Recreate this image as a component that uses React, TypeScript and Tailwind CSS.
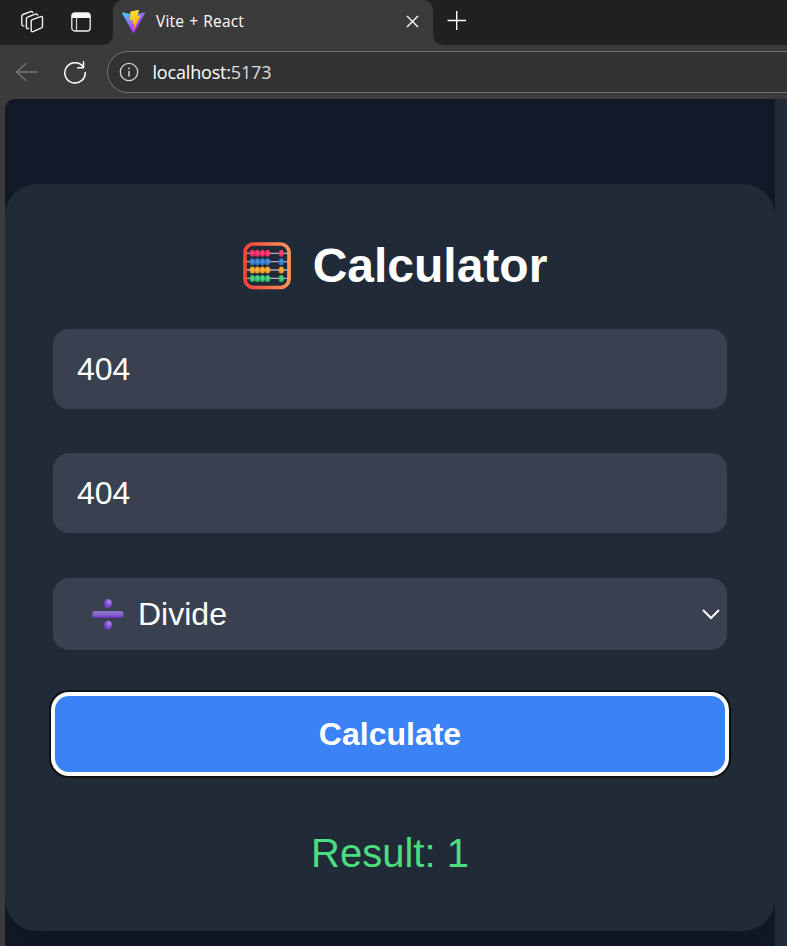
import React from "react";

function WorkspacesIcon() {
  return (
    <svg width="24" height="24" viewBox="0 0 24 24" fill="none" stroke="#f0f0f0" strokeWidth="1.4" strokeLinejoin="round" strokeLinecap="round">
      <path d="M11.200 11.300q0-1.300 1.200-1.700l8.200-2.900q1.900-.6 1.900 1.200v8.200q0 1.200-1 1.700l-7.900 3.600q-2.400 1-2.400-1.200z" />
      <path d="M8.300 18.500q-1.900.5-1.900-1.500V8.900q0-1.300 1.200-1.800l7.700-2.900q1.800-.6 2.300.9" />
      <path d="M3.800 15.900q-2 .2-2-1.700V6.300q0-1.300 1.200-1.800l7.400-2.800q1.800-.6 2.400.9" />
    </svg>
  );
}

function TabActionsIcon() {
  return (
    <svg width="20" height="20" viewBox="0 0 20 20" fill="none">
      <rect x=".8" y=".8" width="18.400" height="18.200" rx="3" stroke="#f0f0f0" strokeWidth="1.300" />
      <path d="M1 6V4q0-3 3-3h12q3 0 3 3v2z" fill="#f7f7f7" />
      <path d="M5.500 6v13" stroke="#d0d0d0" strokeWidth="1.300" />
    </svg>
  );
}

function ViteLogo() {
  return (
    <svg width="23" height="23" viewBox="0 0 256 257">
      <defs>
        <linearGradient id="viteBody" x1="-.828%" x2="57.636%" y1="7.652%" y2="78.411%">
          <stop offset="0%" stopColor="#41D1FF" />
          <stop offset="100%" stopColor="#BD34FE" />
        </linearGradient>
        <linearGradient id="viteBolt" x1="43.376%" x2="50.316%" y1="2.242%" y2="89.030%">
          <stop offset="0%" stopColor="#FFEA83" />
          <stop offset="8.333%" stopColor="#FFDD35" />
          <stop offset="100%" stopColor="#FFA800" />
        </linearGradient>
      </defs>
      <path fill="url(#viteBody)" d="M255.153 37.938L134.897 252.976c-2.483 4.440-8.862 4.466-11.382.048L.875 37.958c-2.746-4.814 1.371-10.646 6.827-9.670l120.385 21.517a6.537 6.537 0 0 0 2.322-.004l117.867-21.483c5.438-.991 9.574 4.796 6.877 9.620Z" />
      <path fill="url(#viteBolt)" d="M185.432.063L96.440 17.501a3.268 3.268 0 0 0-2.634 3.014l-5.474 92.456a3.268 3.268 0 0 0 3.997 3.378l24.777-5.718c2.318-.535 4.413 1.507 3.936 3.838l-7.361 36.047c-.495 2.426 1.782 4.500 4.151 3.780l15.304-4.649c2.372-.720 4.652 1.360 4.150 3.788l-11.698 56.621c-.732 3.542 3.979 5.473 5.943 2.437l1.313-2.028l72.516-144.720c1.215-2.423-.880-5.186-3.540-4.672l-25.505 4.922c-2.396.462-4.435-1.770-3.759-4.114l16.646-57.705c.677-2.350-1.370-4.583-3.769-4.113Z" />
    </svg>
  );
}

const beadRows = [
  { y: 12.2, color: "#e9295f", light: "#ff5d91" },
  { y: 20.6, color: "#3277c8", light: "#61a5ed" },
  { y: 28.9, color: "#ef9a25", light: "#ffc550" },
  { y: 37.3, color: "#34b86c", light: "#6ae99a" },
];

function AbacusIcon() {
  return (
    <svg width="48" height="48" viewBox="0 0 48 48">
      <defs>
        <linearGradient id="abacusFrame">
          <stop stopColor="#f9423a" />
          <stop offset="1" stopColor="#ff9456" />
        </linearGradient>
      </defs>
      {beadRows.map((row) => (
        <g key={row.y}>
          <path d={`M3 ${row.y - 0.9}h42`} stroke="#bda9c9" strokeWidth="1.300" />
          {[9.3, 14.3, 19.4, 24.6, 38.3].map((x) => (
            <g key={x}>
              <ellipse cx={x} cy={row.y - 0.900} rx="2.700" ry="3.500" fill={row.color} />
              <ellipse cx={x + 0.300} cy={row.y - 1.300} rx="1.300" ry="2.100" fill={row.light} opacity=".65" />
            </g>
          ))}
        </g>
      ))}
      <rect x="2" y="2" width="44" height="43.500" rx="8.500" fill="none" stroke="url(#abacusFrame)" strokeWidth="3.700" />
    </svg>
  );
}

function DivideIcon() {
  return (
    <svg width="32" height="32" viewBox="0 0 32 32">
      <defs>
        <linearGradient id="divideBar" x2="0" y2="1">
          <stop stopColor="#8d72c7" />
          <stop offset=".55" stopColor="#8564c9" />
          <stop offset="1" stopColor="#702bd3" />
        </linearGradient>
        <radialGradient id="divideDot" cx=".65" cy=".3">
          <stop stopColor="#ae91e3" />
          <stop offset="1" stopColor="#7844d1" />
        </radialGradient>
      </defs>
      <rect x=".3" y="13" width="31" height="6.800" rx="2" fill="url(#divideBar)" />
      <ellipse cx="16" cy="5.500" rx="4" ry="4.500" fill="url(#divideDot)" />
      <ellipse cx="16" cy="27" rx="4" ry="4.500" fill="url(#divideDot)" />
    </svg>
  );
}

function TabStrip() {
  return (
    <div className="flex h-[45px] bg-[#3b3b3b]">
      <div className="flex w-[113px] items-center rounded-br-[10px] bg-[#202020] pb-[2px] pl-5">
        <WorkspacesIcon />
        <span className="ml-[27px]"><TabActionsIcon /></span>
      </div>
      <div className="flex w-80 bg-[#202020]">
        <div className="flex w-80 items-center rounded-t-[10px] bg-[#3b3b3b] pb-[2px] pl-[9px] pr-[14px]">
          <ViteLogo />
          <span className="ml-[11px] whitespace-nowrap font-['Open_Sans',sans-serif] text-[15.500px] tracking-[0.15px] text-white [word-spacing:1px]">Vite + React</span>
          <svg className="ml-auto" width="13" height="13" viewBox="0 0 13 13" stroke="white" strokeWidth="1.400"><path d="m1 1 11 11M12 1 1 12" /></svg>
        </div>
      </div>
      <div className="flex flex-1 items-center rounded-bl-[10px] bg-[#202020] pb-[3px] pl-[14px]">
        <svg width="20" height="20" viewBox="0 0 20 20" stroke="white" strokeWidth="1.400"><path d="M.5 9.500h18.500M9.700 0v19" /></svg>
      </div>
    </div>
  );
}

function AddressBar() {
  return (
    <div className="flex h-[54px] items-start bg-[#3b3b3b] pl-[15px] pt-[6px]">
      <svg className="mt-[10px]" width="23" height="22" viewBox="0 0 23 22" fill="none" stroke="#777" strokeWidth="1.400"><path d="M22.500 11H1.500M11.500 2 1.500 11l10 9" /></svg>
      <svg className="ml-[25px] mt-[9px]" width="24" height="24" viewBox="0 0 24 24" fill="none" stroke="white" strokeWidth="1.500" strokeLinecap="round" strokeLinejoin="round"><path d="M20.500 7.700V1.800M20.500 7.700H14.700M20.500 7.200A10.200 10.200 0 1 0 22.200 12.400" /></svg>
      <div className="ml-5 flex h-[42px] flex-1 items-center rounded-l-full border border-r-0 border-[#737373] bg-[#323232] pl-[11px]">
        <svg width="20" height="20" viewBox="0 0 20 20" fill="none" stroke="#d4d4d4" strokeWidth="1.300"><circle cx="10" cy="10" r="8.700" /><path d="M10 9v5.500M10 5.500v1.700" strokeWidth="1.500" /></svg>
        <span className="ml-[13.500px] font-['Open_Sans',sans-serif] text-[18px] tracking-[-0.18px] text-white">localhost:<span className="text-[#dedede]">5173</span></span>
      </div>
    </div>
  );
}

export default function App() {
  return (
    <div className="h-[946px] w-[787px] overflow-hidden bg-[#3b3b3b] font-['Liberation_Sans',sans-serif]">
      <TabStrip />
      <AddressBar />
      <div className="ml-[5px] flex h-[847px] overflow-hidden rounded-tl-[10px] bg-[#212a37]">
        <main className="w-[770px] overflow-hidden bg-[#111827] pt-[85px]">
          <section className="h-[747px] rounded-[32px] bg-[#212a37] px-12 pt-12 shadow-[0_20px_30px_-6px_rgba(0,0,0,0.1)]">
            <h1 className="flex h-[68px] items-center justify-center pl-[10px] text-[48px] font-bold leading-[66px] text-white">
              <AbacusIcon />
              <span className="ml-[22px]">Calculator</span>
            </h1>
            <input aria-label="First number" readOnly value="404" className="mt-[29px] block h-20 w-full rounded-2xl bg-[#394150] px-6 text-[32px] text-white outline-none" />
            <input aria-label="Second number" readOnly value="404" className="mt-11 block h-20 w-full rounded-2xl bg-[#394150] px-6 text-[32px] text-white outline-none" />
            <button className="mt-[45px] flex h-[72px] w-full items-center rounded-2xl bg-[#394150] pl-[39px] pr-[7px] text-[32px] text-white">
              <DivideIcon />
              <span className="ml-[14px]">Divide</span>
              <svg className="ml-auto" width="18" height="12" viewBox="0 0 18 12" fill="none" stroke="white" strokeWidth="2"><path d="m1 2 8 8 8-8" /></svg>
            </button>
            <button className="ml-[2px] mt-[46px] block h-[76px] w-[670px] rounded-[14px] bg-[#3b82f6] text-[32px] font-bold text-white shadow-[0_0_0_4px_white,0_0_0_6px_#101010]">Calculate</button>
            <p className="mt-[53px] text-center text-[40px] leading-[56px] text-[#4ade80]">Result: 1</p>
          </section>
        </main>
      </div>
    </div>
  );
}
